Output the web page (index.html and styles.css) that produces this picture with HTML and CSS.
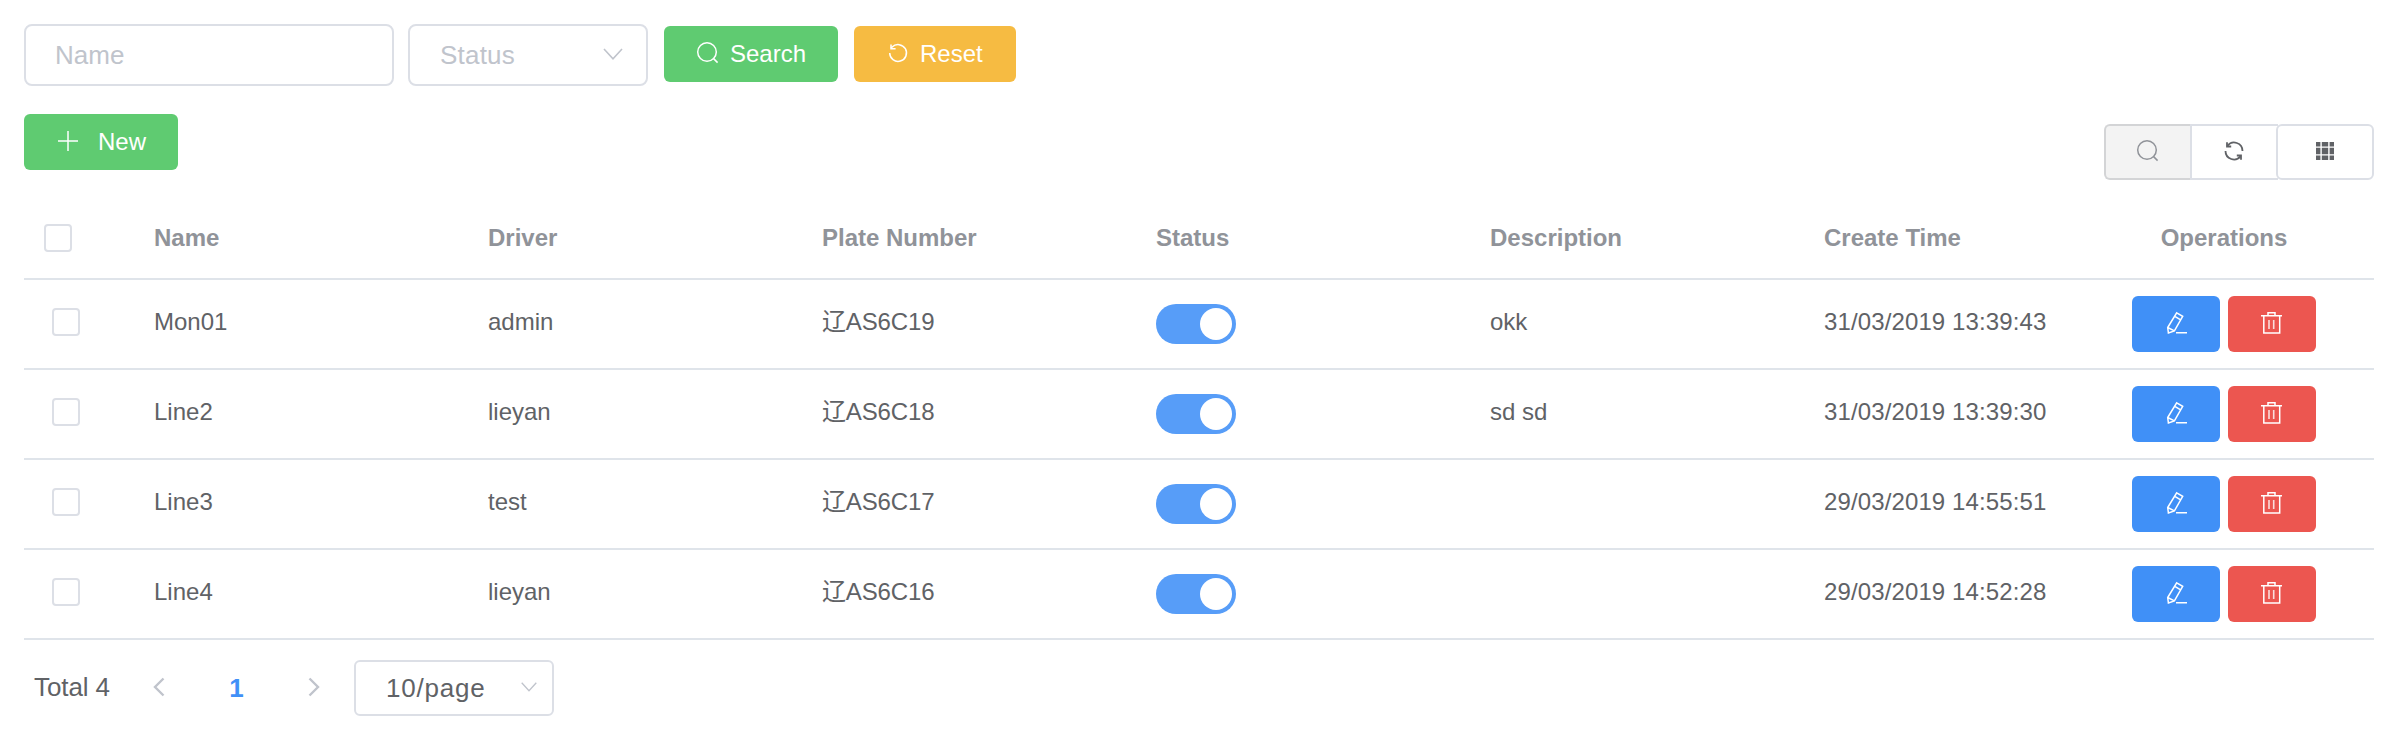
FILE: index.html
```html
<!DOCTYPE html>
<html lang="en">
<head>
<meta charset="utf-8">
<title>Lines</title>
<link rel="stylesheet" href="styles.css">
</head>
<body>
<svg class="sprite" aria-hidden="true">
  <symbol id="search" viewBox="0 0 24 24"><circle cx="11" cy="11" r="9.3"/><path d="M17.6 17.6 21.6 21.6"/></symbol>
  <symbol id="reset" viewBox="0 0 24 24"><path d="M3.700 12a8.400 8.400 0 1 0 2.400-5.900L5 7.200"/><path d="M5 3.400v4.300h4.600"/></symbol>
  <symbol id="plus" viewBox="0 0 24 24"><path d="M12 2v20M2 12h20"/></symbol>
  <symbol id="refresh" viewBox="1 0 24 24"><path d="M20.5 12A8.4 8.4 0 0 0 5.4 6.9M3.5 12A8.4 8.4 0 0 0 18.600 17.100"/><path d="M5 3.300v4.200h4.200M19 20.700v-4.200h-4.200"/></symbol>
  <symbol id="edit" viewBox="0 0 24 24"><path d="M12.700 1.800 18.700 5.300 10.400 19.900 4.400 21.900 3.700 16.500ZM10.800 5.400 16.700 8.900M3.700 16.500 10.400 19.900M12 21.700h11"/></symbol>
  <symbol id="trash" viewBox="0 0 24 24"><path d="M1 4.700h21M3.800 4.700v17.300h15.900V4.700M8 4.700V1.700h7v3"/><path class="thin" d="M9 9v9M13.700 9v9"/></symbol>
</svg>
<main class="page">
  <form class="filters">
    <div class="field field-name">Name</div>
    <div class="field field-status">Status<svg class="chevron" viewBox="0 0 20 12"><path d="M1 1 10 10.800 19 1"/></svg></div>
    <button type="button" class="btn green search"><svg class="icon"><use href="#search"/></svg>Search</button>
    <button type="button" class="btn amber reset"><svg class="icon"><use href="#reset"/></svg>Reset</button>
  </form>
  <div class="toolbar">
    <button type="button" class="btn green new"><svg class="icon"><use href="#plus"/></svg>New</button>
    <div class="tools">
      <button type="button" class="tool active"><svg class="icon"><use href="#search"/></svg></button>
      <button type="button" class="tool"><svg class="icon refresh"><use href="#refresh"/></svg></button>
      <button type="button" class="tool last"><svg class="grid" viewBox="0 0 18 18"><path d="M0 0h4.400v4.400H0zM5.800 0h6.400v4.400H5.800zM13.600 0H18v4.400h-4.400zM0 5.800h4.400v6.400H0zM5.800 5.800h6.400v6.400H5.800zM13.600 5.800H18v6.400h-4.400zM0 13.600h4.400V18H0zM5.800 13.600h6.400V18H5.800zM13.600 13.600H18V18h-4.400z"/></svg></button>
    </div>
  </div>
  <div class="table">
    <div class="row head"><span class="check"></span><span>Name</span><span>Driver</span><span>Plate Number</span><span>Status</span><span>Description</span><span>Create Time</span><span class="center">Operations</span></div>
    <div class="row"><span class="check"></span><span>Mon01</span><span>admin</span><span class="plate">辽AS6C19</span><i class="switch"></i><span>okk</span><span class="time">31/03/2019 13:39:43</span><div class="ops"><button type="button" class="btn blue"><svg class="icon"><use href="#edit"/></svg></button><button type="button" class="btn red"><svg class="icon"><use href="#trash"/></svg></button></div></div>
    <div class="row"><span class="check"></span><span>Line2</span><span>lieyan</span><span class="plate">辽AS6C18</span><i class="switch"></i><span>sd sd</span><span class="time">31/03/2019 13:39:30</span><div class="ops"><button type="button" class="btn blue"><svg class="icon"><use href="#edit"/></svg></button><button type="button" class="btn red"><svg class="icon"><use href="#trash"/></svg></button></div></div>
    <div class="row"><span class="check"></span><span>Line3</span><span>test</span><span class="plate">辽AS6C17</span><i class="switch"></i><span></span><span class="time">29/03/2019 14:55:51</span><div class="ops"><button type="button" class="btn blue"><svg class="icon"><use href="#edit"/></svg></button><button type="button" class="btn red"><svg class="icon"><use href="#trash"/></svg></button></div></div>
    <div class="row"><span class="check"></span><span>Line4</span><span>lieyan</span><span class="plate">辽AS6C16</span><i class="switch"></i><span></span><span class="time">29/03/2019 14:52:28</span><div class="ops"><button type="button" class="btn blue"><svg class="icon"><use href="#edit"/></svg></button><button type="button" class="btn red"><svg class="icon"><use href="#trash"/></svg></button></div></div>
  </div>
  <nav class="pager">
    <span class="total">Total 4</span>
    <svg class="arrow" viewBox="0 0 12 20"><path d="M10.500 1.500 2 10l8.500 8.500"/></svg>
    <span class="current">1</span>
    <svg class="arrow" viewBox="0 0 12 20"><path d="M1.500 1.500 10 10l-8.500 8.500"/></svg>
    <div class="size">10/page<svg class="chevron" viewBox="0 0 16 10"><path d="M.7.700 8 8.700 15.300.700"/></svg></div>
  </nav>
</main>
</body>
</html>
```
FILE: styles.css
```css
* { box-sizing: border-box; }
body {
  margin: 0;
  background: #fff;
  color: #606266;
  font: 24px/28px "Liberation Sans", "Noto Sans CJK SC", sans-serif;
}
svg { display: block; fill: none; stroke: currentColor; flex: none; }
.sprite { position: absolute; width: 0; height: 0; }
.page { padding: 24px 28px 0 24px; }
.icon { width: 24px; height: 24px; stroke-width: 1.5; }
.refresh { stroke-width: 1.8; }
.thin { stroke-width: 1.6; opacity: .8; }

.filters { display: flex; height: 62px; }
.field {
  display: flex;
  align-items: center;
  height: 62px;
  padding: 0 23px 0 29px;
  border: 2px solid #dcdfe6;
  border-radius: 8px;
  color: #c0c4cc;
  font-size: 26px;
}
.field-name { width: 370px; margin-right: 14px; }
.field-status { width: 240px; justify-content: space-between; margin-right: 16px; padding-left: 30px; letter-spacing: .2px; }
.field-status .chevron { width: 20px; height: 12px; margin-bottom: 2px; stroke-width: 1.6; }

.btn {
  display: flex;
  align-items: center;
  height: 56px;
  padding: 0;
  border: 0;
  border-radius: 6px;
  color: #fff;
  font: inherit;
}
.btn .icon { margin-bottom: 2px; }
.green { background: #5fcb71; }
.amber { background: #f6bb42; }
.blue { background: #4090f7; }
.red { background: #ec5650; }
.search { width: 174px; margin: 2px 16px 0 0; padding-left: 32px; gap: 10px; }
.reset { width: 162px; margin-top: 2px; padding-left: 32px; gap: 10px; }
.new { width: 154px; padding-left: 32px; gap: 18px; }

.toolbar { display: flex; justify-content: space-between; height: 84px; margin-top: 28px; }
.tools { display: flex; height: 56px; margin-top: 10px; }
.tool {
  display: flex;
  align-items: center;
  justify-content: center;
  width: 88px;
  padding: 0 0 2px;
  border: 2px solid #dcdfe6;
  border-right-width: 0;
  background: #fff;
  color: #606266;
}
.tool.active { width: 86px; border-color: #d3d4d6; border-radius: 6px 0 0 6px; background: #f3f3f3; color: #909399; }
.tool.last { width: 98px; margin-left: -2px; border-right-width: 2px; border-radius: 6px; }
.grid { width: 18px; height: 18px; fill: #606266; stroke: none; }

.row {
  display: grid;
  grid-template-columns: 130px 334px 334px 334px 334px 334px 250px 300px;
  align-items: center;
  height: 90px;
  padding-bottom: 4px;
  border-bottom: 2px solid #dfe4ea;
}
.head { height: 82px; padding-bottom: 0; color: #909399; font-weight: bold; }
.center { text-align: center; }
.plate { letter-spacing: -.15px; }
.time { letter-spacing: .12px; }
.check {
  width: 28px;
  height: 28px;
  margin-left: 28px;
  border: 2px solid #dcdfe6;
  border-radius: 4px;
}
.head .check { margin-left: 20px; }
.switch {
  display: flex;
  justify-content: flex-end;
  width: 80px;
  height: 40px;
  margin-top: 4px;
  padding: 4px;
  border-radius: 20px;
  background: #579df8;
}
.switch::after { content: ""; width: 32px; height: 32px; border-radius: 50%; background: #fff; }
.ops { display: flex; justify-content: center; gap: 8px; margin-top: 4px; }
.ops .btn { width: 88px; justify-content: center; }

.pager { display: flex; align-items: center; height: 56px; margin-top: 20px; padding-left: 10px; font-size: 26px; }
.arrow { width: 12px; height: 20px; margin-bottom: 2px; color: #c0c4cc; stroke-width: 2.4; }
.total { width: 119px; margin-bottom: 2px; letter-spacing: -.1px; }
.current { width: 143px; color: #4090f7; font-weight: bold; text-align: center; }
.size {
  display: flex;
  align-items: center;
  justify-content: space-between;
  width: 200px;
  height: 56px;
  margin-left: 34px;
  padding: 0 15px 0 30px;
  border: 2px solid #dcdfe6;
  border-radius: 6px;
  letter-spacing: .8px;
}
.size .chevron { width: 16px; height: 10px; margin-bottom: 2px; color: #c0c4cc; stroke-width: 1.3; }
```
